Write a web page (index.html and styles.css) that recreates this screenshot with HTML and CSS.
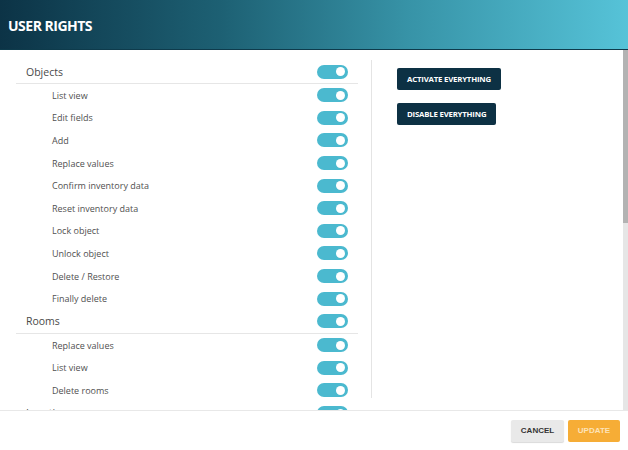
FILE: index.html
```html
<!DOCTYPE html>
<html>
<head>
<meta charset="utf-8">
<link rel="stylesheet" href="styles.css">
</head>
<body>
<div class="dialog">
  <header class="title-bar"><h1 class="title">USER RIGHTS</h1></header>
  <main class="body">
    <div class="content">
      <section class="rights">
        <div class="group">
          <div class="row head"><span>Objects</span><span class="toggle"></span></div>
          <div class="row sub"><span>List view</span><span class="toggle"></span></div>
          <div class="row sub"><span>Edit fields</span><span class="toggle"></span></div>
          <div class="row sub"><span>Add</span><span class="toggle"></span></div>
          <div class="row sub"><span>Replace values</span><span class="toggle"></span></div>
          <div class="row sub"><span>Confirm inventory data</span><span class="toggle"></span></div>
          <div class="row sub"><span>Reset inventory data</span><span class="toggle"></span></div>
          <div class="row sub"><span>Lock object</span><span class="toggle"></span></div>
          <div class="row sub"><span>Unlock object</span><span class="toggle"></span></div>
          <div class="row sub"><span>Delete / Restore</span><span class="toggle"></span></div>
          <div class="row sub"><span>Finally delete</span><span class="toggle"></span></div>
        </div>
        <div class="group">
          <div class="row head"><span>Rooms</span><span class="toggle"></span></div>
          <div class="row sub"><span>Replace values</span><span class="toggle"></span></div>
          <div class="row sub"><span>List view</span><span class="toggle"></span></div>
          <div class="row sub"><span>Delete rooms</span><span class="toggle"></span></div>
        </div>
        <div class="group">
          <div class="row head"><span>Locations</span><span class="toggle"></span></div>
        </div>
      </section>
      <aside class="actions">
        <button class="btn-dark">ACTIVATE EVERYTHING</button>
        <button class="btn-dark">DISABLE EVERYTHING</button>
      </aside>
    </div>
    <div class="scrollbar"><div class="scroll-thumb"></div></div>
  </main>
  <footer class="footer">
    <button class="btn-cancel">CANCEL</button>
    <button class="btn-update">UPDATE</button>
  </footer>
</div>
</body>
</html>
```
FILE: styles.css
```css
* { box-sizing: border-box; }
html, body { margin: 0; padding: 0; background: #fff; }
body { font-family: "Open Sans", "Liberation Sans", sans-serif; }

.dialog {
  width: 628px;
  height: 450px;
  display: flex;
  flex-direction: column;
  overflow: hidden;
}

.title-bar {
  height: 50px;
  flex: none;
  display: flex;
  align-items: center;
  padding-left: 8px;
  padding-top: 1px;
  background: linear-gradient(90deg, #0c3346 0%, #1d6073 35%, #3793a7 65%, #56c3d8 100%);
  border-bottom: 1px solid #0e3b4c;
}
.title {
  margin: 0;
  color: #fff;
  font-size: 14px;
  font-weight: 700;
  letter-spacing: -0.5px;
}

.body {
  flex: 1;
  min-height: 0;
  display: flex;
}

.content {
  flex: 1;
  min-width: 0;
  overflow: hidden;
  display: flex;
  align-items: flex-start;
  padding: 10px 0 0 16px;
}

.scrollbar {
  width: 5px;
  flex: none;
  background: #e6e6e6;
}
.scroll-thumb {
  height: 173px;
  background: #b3b3b3;
}

.rights { width: 342px; flex: none; }

.row {
  display: flex;
  align-items: center;
  justify-content: space-between;
  height: 22.6px;
  padding-right: 10px;
}
.row.head {
  height: 24px;
  padding-left: 10px;
  font-size: 10.5px;
  color: #4a4a4a;
  border-bottom: 1px solid #e6e6e6;
}
.row.sub {
  padding-left: 36px;
  font-size: 9px;
  color: #505050;
}

.toggle {
  width: 31px;
  height: 14px;
  border-radius: 7px;
  background: #4bb9cf;
  display: flex;
  align-items: center;
  justify-content: flex-end;
  padding-right: 3px;
}
.toggle::after {
  content: "";
  width: 9px;
  height: 9px;
  border-radius: 50%;
  background: #fff;
}

.actions {
  margin-left: 13px;
  height: 338px;
  flex: none;
  border-left: 1px solid #e4e4e4;
  padding: 8px 0 0 25px;
  display: flex;
  flex-direction: column;
  align-items: flex-start;
  gap: 13px;
}

.btn-dark {
  height: 22px;
  padding: 0 10px;
  border: 0;
  border-radius: 2px;
  background: #0d3144;
  color: #fff;
  font-family: "Open Sans", "Liberation Sans", sans-serif;
  font-size: 7.8px;
  font-weight: 700;
  letter-spacing: -0.2px;
}

.footer {
  height: 40px;
  flex: none;
  border-top: 1px solid #e8e8e8;
  display: flex;
  align-items: center;
  justify-content: flex-end;
  gap: 4px;
  padding-right: 8px;
}
.btn-cancel, .btn-update {
  height: 22px;
  width: 52px;
  border: 0;
  border-radius: 2px;
  font-family: "Liberation Sans", Arial, sans-serif;
  font-size: 8px;
  font-weight: 700;
}
.btn-cancel {
  width: 53px;
  background: #e9e9e9;
  color: #333;
  box-shadow: 0 1px 1px rgba(0,0,0,0.15);
}
.btn-update {
  background: #f6ad36;
  color: #fde3b8;
}
```
